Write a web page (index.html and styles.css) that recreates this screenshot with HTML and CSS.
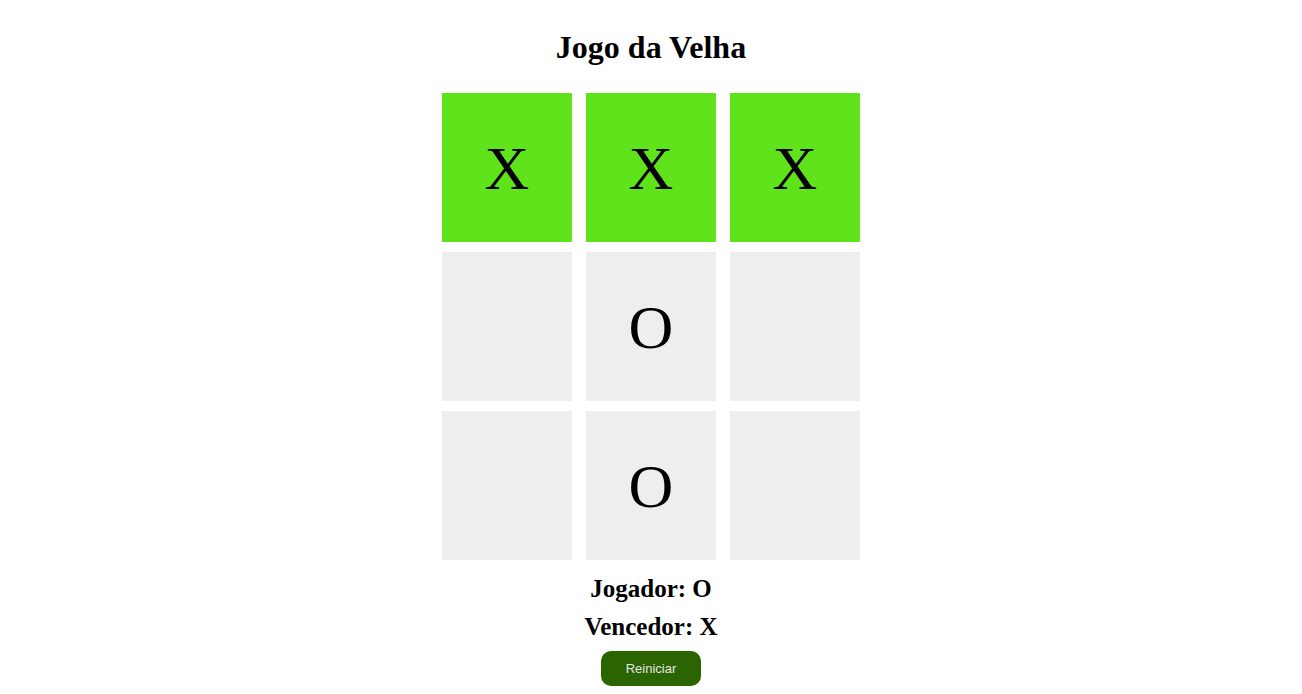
FILE: index.html
```html
<!DOCTYPE html>
<html lang="pt">
<head>
<meta charset="utf-8">
<title>Jogo da Velha</title>
<link rel="stylesheet" href="styles.css">
</head>
<body>
<main class="app">
  <h1 class="title">Jogo da Velha</h1>
  <div class="board">
    <div class="cell win">X</div>
    <div class="cell win">X</div>
    <div class="cell win">X</div>
    <div class="cell"></div>
    <div class="cell">O</div>
    <div class="cell"></div>
    <div class="cell"></div>
    <div class="cell">O</div>
    <div class="cell"></div>
  </div>
  <h2 class="status">Jogador: O</h2>
  <h2 class="status">Vencedor: X</h2>
  <button class="reset">Reiniciar</button>
</main>
</body>
</html>
```
FILE: styles.css
```css
html, body {
  margin: 0;
  padding: 0;
  background: #ffffff;
}
body {
  font-family: "Liberation Serif", "Times New Roman", serif;
  color: #000;
}
.app {
  display: flex;
  flex-direction: column;
  align-items: center;
  padding-top: 29px;
}
.title {
  margin: 0;
  font-size: 32px;
  font-weight: bold;
  line-height: 37px;
}
.board {
  margin-top: 27px;
  display: grid;
  grid-template-columns: repeat(3, 130px);
  grid-auto-rows: 149px;
  column-gap: 14px;
  row-gap: 10px;
}
.cell {
  background: #eeeeee;
  display: flex;
  align-items: center;
  justify-content: center;
  font-size: 62px;
  line-height: 1;
}
.cell.win {
  background: #5fe31a;
}
.status {
  margin: 0;
  font-size: 25px;
  font-weight: bold;
  line-height: 28px;
}
.board + .status {
  margin-top: 15px;
}
.status + .status {
  margin-top: 10px;
}
.reset {
  margin-top: 10px;
  width: 100px;
  height: 35px;
  border: none;
  border-radius: 10px;
  background: #2a6502;
  color: #e6e6e6;
  font-family: "Liberation Sans", Arial, sans-serif;
  font-size: 13px;
  cursor: pointer;
}
```
